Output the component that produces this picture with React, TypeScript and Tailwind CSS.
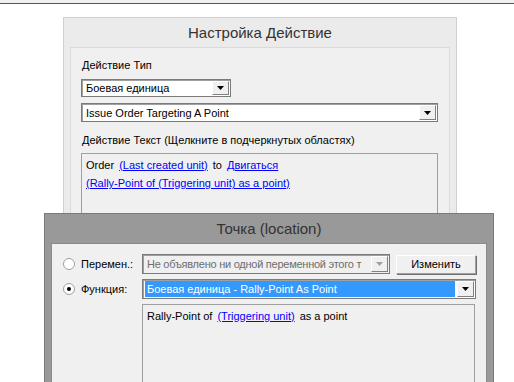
const font = { fontFamily: '"Liberation Sans", Arial, sans-serif' };

function Arrow({ disabled }: { disabled?: boolean }) {
  return (
    <div className="flex h-full w-[17px] shrink-0 items-center justify-center border border-t-white border-l-white border-r-[#808080] border-b-[#808080] bg-[#f0f0f0]">
      <svg width="7" height="4" viewBox="0 0 7 4">
        <path d="M0 0h7L3.5 4z" fill={disabled ? "#a0a0a0" : "#000"} />
      </svg>
    </div>
  );
}

function Combo({
  text,
  className,
  disabled,
  selected,
}: {
  text: string;
  className: string;
  disabled?: boolean;
  selected?: boolean;
}) {
  return (
    <div
      className={`flex items-stretch border border-[#7a7a7a] shadow-[inset_1px_1px_0_#a0a0a0] p-[1px] ${
        disabled ? "bg-[#f0f0f0]" : "bg-white"
      } ${className}`}
    >
      <div className="flex flex-1 items-center overflow-hidden pl-[1px] pr-[2px]">
        <div
          className={`flex h-full w-full items-center overflow-hidden whitespace-nowrap px-[2px] ${
            selected
              ? "bg-[#3399ff] text-white"
              : disabled
              ? "tracking-[-0.25px] text-[#6d6d6d]"
              : "text-black"
          }`}
        >
          {text}
        </div>
      </div>
      <Arrow disabled={disabled} />
    </div>
  );
}

function Link({ children }: { children: React.ReactNode }) {
  return <span className="text-[#0000ff] underline">{children}</span>;
}

function Radio({ checked }: { checked?: boolean }) {
  return (
    <div className="flex h-[12px] w-[12px] items-center justify-center rounded-full border border-[#a0a0a0] bg-white">
      {checked && <div className="h-[4px] w-[4px] rounded-full bg-black" />}
    </div>
  );
}

export default function App() {
  return (
    <div className="relative h-[382px] w-[514px] overflow-hidden bg-white text-[11px] leading-[14px]" style={font}>
      <div className="h-[4px] border-b border-[#555] bg-[#f0f0f0]" />

      {/* Настройка Действие */}
      <div className="absolute left-[63px] top-[17px] h-[300px] w-[394px] border border-[#d0d0d0] bg-[#ebebeb] px-[6px]">
        <div className="flex h-[29px] items-center justify-center text-[15px] text-[#333]">
          Настройка Действие
        </div>
        <div className="h-[260px] border border-[#dadada] bg-[#f0f0f0] px-[10px] pt-[10px]">
          <div className="pl-[1px]">Действие Тип</div>
          <Combo text="Боевая единица" className="mt-[7px] h-[18px] w-[150px]" />
          <Combo text="Issue Order Targeting A Point" className="mt-[6px] h-[19px] w-[357px]" />
          <div className="mt-[11px] pl-[1px]">Действие Текст (Щелкните в подчеркнутых областях)</div>
          <div className="mt-[6px] h-[120px] w-[357px] border border-[#a0a0a0] bg-[#f0f0f0] px-[4px] pt-[2px] leading-[18px]">
            <div className="flex gap-[5px]">
              <span>Order</span>
              <Link>(Last created unit)</Link>
              <span>to</span>
              <Link>Двигаться</Link>
            </div>
            <div>
              <Link>(Rally-Point of (Triggering unit) as a point)</Link>
            </div>
          </div>
        </div>
      </div>

      {/* Точка (location) */}
      <div className="absolute left-[44px] top-[213px] h-[200px] w-[450px] border border-[#7a7a7a] bg-[#999999] px-[6px]">
        <div className="flex h-[29px] items-center justify-center text-[15px] text-[#333]">
          Точка (location)
        </div>
        <div className="h-[170px] border border-[#8a8a8a] bg-[#f0f0f0] pl-[11px] pt-[10px]">
          <div className="flex items-center">
            <div className="flex w-[79px] items-center gap-[6px]">
              <Radio />
              <span>Перемен.:</span>
            </div>
            <Combo
              text="Не объявлено ни одной переменной этого т"
              className="h-[20px] w-[248px]"
              disabled
            />
            <button className="ml-[6px] h-[19px] w-[80px] border border-t-white border-l-white border-r-[#a0a0a0] border-b-[#a0a0a0] bg-[#f0f0f0] text-black shadow-[1px_1px_0_#707070]">
              Изменить
            </button>
          </div>
          <div className="mt-[5px] flex items-center">
            <div className="flex w-[79px] items-center gap-[6px]">
              <Radio checked />
              <span>Функция:</span>
            </div>
            <Combo
              text="Боевая единица - Rally-Point As Point"
              className="h-[20px] w-[334px]"
              selected
            />
          </div>
          <div className="ml-[79px] mt-[5px] h-[120px] w-[333px] border border-[#a0a0a0] bg-[#f0f0f0] px-[4px] pt-[2px] leading-[18px]">
            <div className="flex gap-[5px]">
              <span>Rally-Point of</span>
              <Link>(Triggering unit)</Link>
              <span>as a point</span>
            </div>
          </div>
        </div>
      </div>
    </div>
  );
}
